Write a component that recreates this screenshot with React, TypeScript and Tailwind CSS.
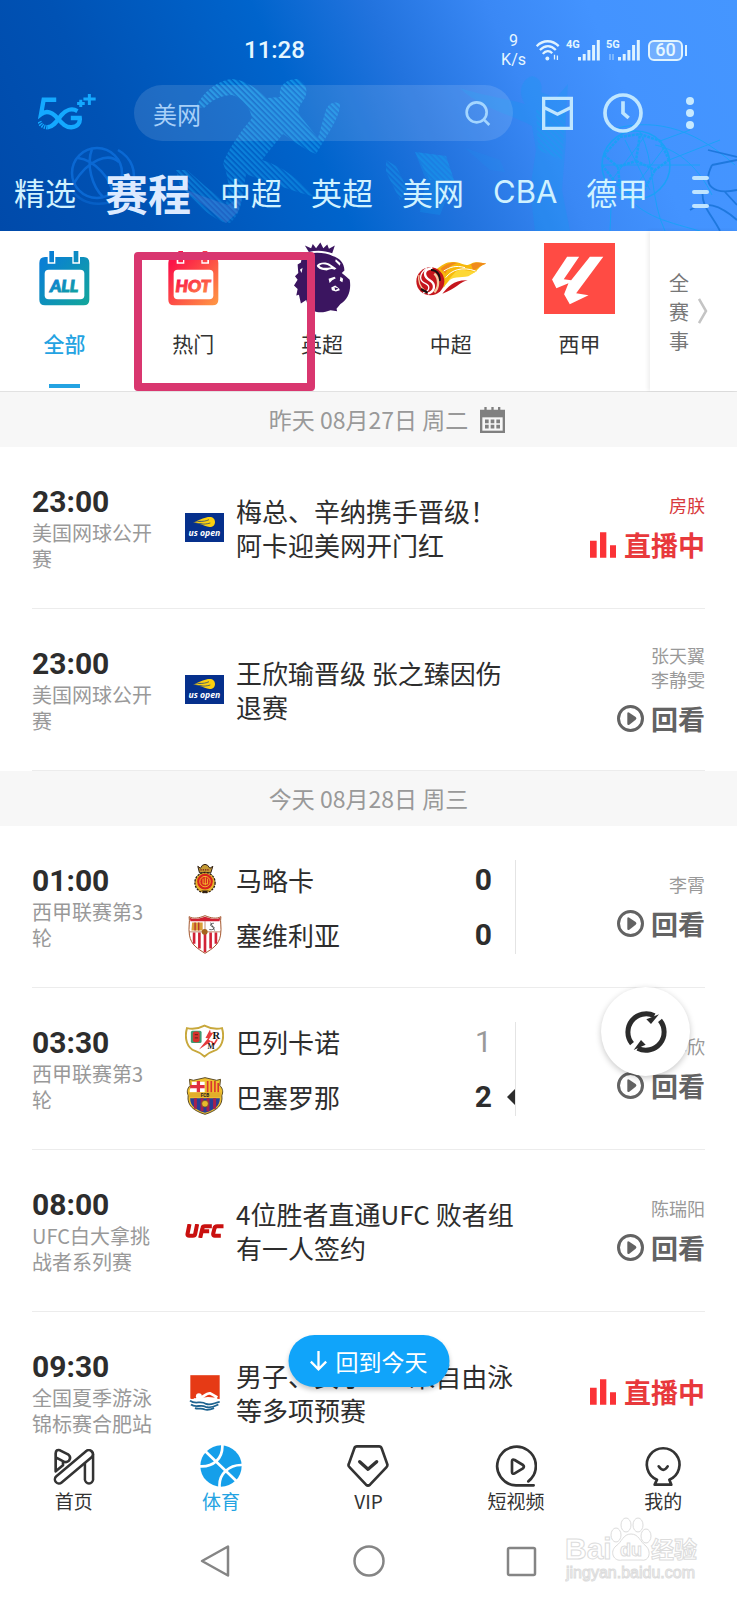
import { useState, type ReactNode } from 'react';

type Team = { name: string; score: number; badge: ReactNode; lost?: boolean; won?: boolean };

type Match = {
  id: string;
  time: string;
  league: string;
  title?: string;
  logo?: ReactNode;
  teams?: Team[];
  hosts: string[];
  status: 'live' | 'replay';
};

/* ---------- header drawings ---------- */

function HeaderArt() {
  return (
    <svg className="absolute inset-0 h-full w-full" viewBox="0 0 737 231" preserveAspectRatio="xMidYMid slice" aria-hidden="true">
      <defs>
        <pattern id="hatch" width="4" height="4" patternUnits="userSpaceOnUse" patternTransform="rotate(-45)">
          <rect width="2.4" height="4" fill="#16a0ee" />
        </pattern>
        <linearGradient id="fade" x1="0" y1="0" x2="0" y2="1">
          <stop offset="0.4" stopColor="#fff" />
          <stop offset="1" stopColor="#777" />
        </linearGradient>
        <mask id="fadeMask">
          <rect width="737" height="231" fill="url(#fade)" />
        </mask>
      </defs>
      <g fill="url(#hatch)" opacity="0.7" mask="url(#fadeMask)">
        <path d="M196 107 C203 92 218 80 232 79 C246 80 258 90 267 98 L280 97 C278 86 286 79 297 79 C307 82 309 92 303 101 C298 108 297 111 301 117 L318 138 L325 113 C327 104 334 100 340 104 C340 112 336 120 331 129 L316 154 C305 150 292 140 283 134 L269 151 L262 160 C282 166 300 180 315 197 C297 192 272 184 246 174 L243 194 C241 208 238 216 230 223 C222 224 212 216 202 209 L180 186 L176 170 L187 170 L205 186 L226 203 C231 190 228 176 223 163 C228 150 240 132 252 118 C250 108 243 98 232 95 C222 95 212 100 204 108 Z" />
      </g>
      <path d="M182 188 L226 223 L238 212 L243 194 L228 205 L202 196 Z" fill="#8a84dc" opacity="0.22" />
      <g fill="none" stroke="#1279ea" strokeWidth="2.5" opacity="0.6">
        <circle cx="97" cy="173" r="25" />
        <path d="M74 183 C88 160 108 152 119 162 M78 158 C95 160 112 180 112 193 M92 149 C86 165 92 186 103 197 M118 150 C132 158 137 172 132 186" />
        <path d="M72 190 C84 208 112 208 124 192" opacity="0.6" />
      </g>
      <g fill="#119cf0" opacity="0.28">
        <path d="M460 88 C480 95 505 98 525 104 C518 94 520 80 532 76 C541 78 543 86 541 92 L556 98 L568 84 L566 112 L566 140 L562 190 L570 231 L535 231 L530 190 L536 150 L532 126 C510 114 480 108 460 88 Z" />
        <path d="M415 152 L446 156 L454 180 L440 215 L420 212 L426 180 Z" />
        <path d="M465 148 L500 160 L505 172 L490 170 Z" opacity="0.5" />
      </g>
      <g fill="url(#hatch)" opacity="0.4">
        <path d="M386 160 L396 166 L408 190 L400 200 L386 172 Z M415 152 L446 156 L454 180 L430 180 Z M536 110 L566 110 L562 160 L538 150 Z" />
      </g>
      <g fill="none" stroke="#0aa8f5" strokeWidth="1.6" opacity="0.7">
        <circle cx="636" cy="165" r="34" />
        <path d="M604 155 L620 137 L640 134 L660 141 L669 160 M604 155 L618 167 L636 161 L640 134 M636 161 L655 170 L669 160 M618 167 L620 188 L640 198 L655 170 M602 165 L620 188" strokeWidth="2.5" strokeDasharray="3 1" />
        <path d="M602 165 H700 M610 130 C650 118 690 125 735 165 M620 188 C640 215 660 220 700 231 M655 145 C680 150 700 170 712 195 M640 132 C655 160 650 200 665 231 M660 141 L690 130 M669 160 L720 140 M612 185 L610 231 M625 140 L650 190 M645 136 L612 180 M664 148 L628 196" strokeWidth="1" />
      </g>
      <g fill="none" stroke="#1570d6" strokeWidth="1.8" opacity="0.8">
        <path d="M708 150 L737 157 M712 165 C702 185 712 195 737 190 M712 165 L737 160 M703 190 C700 205 712 215 720 231 M690 210 C705 200 720 205 737 220 M725 192 L737 205" />
      </g>
    </svg>
  );
}

function Logo5G() {
  return (
    <svg className="h-10 w-[58px] shrink-0" viewBox="113 280 175 120" role="img" aria-label="5G++">
      <g fill="none" stroke="#14a9ff" strokeWidth="13">
        <path d="M168 300 H130 L122 344 C140 330 156 338 172 356 C186 372 196 384 214 383 C232 382 241 370 239 355 H212" />
        <path d="M232 334 C214 324 196 332 184 346 C172 362 160 382 142 383" />
        <path d="M142 383 C126 382 120 374 116 364" strokeDasharray="4 3" />
      </g>
      <path d="M231 311 H254 M242 300 V322 M250 298 H287 M268 283 V316" fill="none" stroke="#14a9ff" strokeWidth="9" />
    </svg>
  );
}

function Signal({ label, arrows }: { label: string; arrows?: boolean }) {
  return (
    <div className="flex items-start">
      <span className="w-3 font-[Roboto] text-[11px] leading-3 font-bold">{label}</span>
      <svg className="h-[22px] w-[22px] overflow-visible" viewBox="0 0 22 22" aria-hidden="true">
        <path d="M1.500 21.500V18M6.200 21.500V15M10.900 21.500V11M15.600 21.500V6M20.300 21.500V1" stroke="#dff3ff" strokeWidth="3" />
        {arrows && <path d="M-8 15v6M-5 15v6" stroke="#8fc4ff" strokeWidth="1.500" />}
      </svg>
    </div>
  );
}

function StatusBar() {
  return (
    <div className="relative flex h-[85px] items-center justify-between pt-[15px] pr-[50px] pl-[244px] text-[#e6f7ff]">
      <span className="font-[Roboto] text-2xl font-medium">11:28</span>
      <div className="flex items-center gap-1.5">
        <div className="mr-1 text-center font-[Roboto] text-base leading-[19px]">
          <div>9</div>
          <div>K/s</div>
        </div>
        <svg className="h-[22px] w-6" viewBox="510 115 74 66" aria-hidden="true">
          <g fill="none" stroke="#dff3ff" strokeWidth="7">
            <path d="M512 136 C532 116 560 116 580 136" />
            <path d="M522 148 C538 132 556 132 571 148" />
            <path d="M531 160 C540 149 552 149 560 158" />
            <path d="M567 163v14M576 165v14" strokeWidth="4" />
          </g>
          <circle cx="545" cy="174" r="6" fill="#dff3ff" />
        </svg>
        <Signal label="4G" />
        <Signal label="5G" arrows />
        <div className="flex items-center">
          <div className="ml-0.5 flex h-[21px] w-[35px] items-center justify-center rounded-md border-2 border-[#dff3ff] bg-white/25 font-[Roboto] text-lg leading-none font-medium">60</div>
          <div className="ml-0.5 h-[11px] w-0.5 bg-[#dff3ff]" />
        </div>
      </div>
    </div>
  );
}

function SearchRow() {
  return (
    <div className="relative flex h-14 items-center pr-[43px] pl-[38px]">
      <Logo5G />
      <label className="ml-[38px] flex h-14 min-w-0 flex-1 items-center rounded-full bg-white/12 pr-[22px] pl-[19px]">
        <span className="sr-only">搜索</span>
        <input className="h-full min-w-0 flex-1 bg-transparent text-2xl text-[#a8d0f8] outline-none placeholder:text-[#a8d0f8]" type="text" placeholder="美网" />
        <svg className="h-[26px] w-[26px]" viewBox="295 300 78 78" aria-hidden="true">
          <g fill="none" stroke="#a4d6ff" strokeWidth="8">
            <circle cx="330" cy="337" r="30" />
            <path d="M351 358 L368 375" />
          </g>
        </svg>
      </label>
      <button type="button" aria-label="消息" className="ml-[29px]">
        <svg className="h-[35px] w-[31px]" viewBox="524 290 94 104" fill="none" stroke="#bfe6ff" strokeWidth="10">
          <path d="M529 296 H613 V387 H529 Z M529 323 L571 344 L613 323" />
        </svg>
      </button>
      <button type="button" aria-label="历史" className="ml-[30px]">
        <svg className="h-10 w-10" viewBox="708 279 120 120" fill="none" stroke="#bfe6ff">
          <circle cx="768" cy="339" r="54" strokeWidth="11" />
          <path d="M768 304 V339 L785 354" strokeWidth="11" />
        </svg>
      </button>
      <button type="button" aria-label="更多" className="ml-[43px] flex flex-col gap-1">
        <i className="h-2 w-2 rounded-full bg-[#c8eaff]" />
        <i className="h-2 w-2 rounded-full bg-[#c8eaff]" />
        <i className="h-2 w-2 rounded-full bg-[#c8eaff]" />
      </button>
    </div>
  );
}

const channels = ['精选', '赛程', '中超', '英超', '美网', 'CBA', '德甲'];

function ChannelTabs() {
  const [active, setActive] = useState('赛程');
  return (
    <nav className="relative flex h-[90px] items-center gap-[29px] overflow-hidden pt-3 pr-7 pl-[14px] whitespace-nowrap">
      {channels.map(c => (
        <button
          key={c}
          type="button"
          onClick={() => setActive(c)}
          className={c === active ? 'text-[43px] leading-none font-bold text-[#dceaff]' : c === 'CBA' ? 'font-[Inter] text-[31px] text-[#d0f2ff]' : 'text-[31px] text-[#d0f2ff]'}
        >
          {c}
        </button>
      ))}
      <button type="button" aria-label="全部频道" className="ml-auto flex flex-col gap-[10px]">
        <i className="h-1 w-[17px] rounded-full bg-[#bfe4ff]" />
        <i className="h-1 w-[17px] rounded-full bg-[#bfe4ff]" />
        <i className="h-1 w-[17px] rounded-full bg-[#bfe4ff]" />
      </button>
    </nav>
  );
}

/* ---------- league strip ---------- */

function CalendarIcon({ id, from, to, text }: { id: string; from: string; to: string; text: string }) {
  return (
    <svg className="h-[55px] w-[51px]" viewBox="0 0 153 165" aria-hidden="true">
      <defs>
        <linearGradient id={id} x1="0" y1="0" x2="1" y2="1">
          <stop offset="0.15" stopColor={from} />
          <stop offset="1" stopColor={to} />
        </linearGradient>
      </defs>
      <path d="M31 0 H45 V18 H104 V0 H118 V18 H134 Q151 18 151 36 V146 Q151 163 134 163 H18 Q1 163 1 146 V36 Q1 18 18 18 H31 Z" fill={`url(#${id})`} />
      <path d="M26 18 H31 V34 H45 V18 H49 V38 H26 Z M100 18 H104 V34 H118 V18 H123 V38 H100 Z" fill="#fff" />
      <rect x="17" y="56" width="119" height="89" rx="12" fill="#fff" />
      <text x="75" y="123" textAnchor="middle" fontFamily="Lato, sans-serif" fontSize="52" fontWeight="900" fontStyle="italic" fill={`url(#${id})`} stroke={`url(#${id})`} strokeWidth="3">
        {text}
      </text>
    </svg>
  );
}

function LionIcon() {
  return (
    <svg className="h-[72px] w-[58px]" viewBox="874 37 176 216" aria-hidden="true">
      <g fill="#3b1560">
        <path d="M922 66 L910 46 L929 55 L934 42 L944 55 L957 37 L966 55 L978 43 L983 56 L1001 46 L993 70 C970 61 945 60 922 66 Z" />
        <path d="M902 76 C930 66 970 66 994 78 C1014 84 1030 98 1030 122 L1022 130 L1034 140 L1046 150 C1052 184 1040 210 1018 224 L1006 238 L1008 246 L988 243 C970 250 950 252 936 244 L920 232 L914 212 L898 222 L892 196 L884 198 L888 178 L877 168 L888 150 L880 140 L890 130 L888 104 L898 98 Z" />
      </g>
      <g fill="#fff">
        <path d="M946 108 C952 97 974 95 988 104 L1006 116 L1000 120 C990 115 984 120 976 122 C964 122 950 118 946 108 Z" />
        <path d="M982 147 L1000 141 L1004 146 L993 152 L985 160 Z" />
        <path d="M1018 141 L1026 147 L1024 158 L1016 153 Z M990 174 L1002 168 L1014 177 L1016 182 L1004 186 L992 182 Z" />
        <path d="M912 84 L930 78 L922 88 Z M1004 88 L1018 100 L1016 108 L1002 94 Z" />
        <path d="M895 120 L903 114 L900 130 Z" />
      </g>
      <g fill="#3b1560">
        <path d="M954 108 C964 99 978 104 990 112 C976 113 964 118 954 108 Z" />
        <path d="M1000 173 L1012 177 L1002 182 Z" />
      </g>
    </svg>
  );
}

function DragonBallIcon() {
  return (
    <svg className="h-9 w-[72px]" viewBox="140 90 216 106" aria-hidden="true">
      <path d="M205 116 C222 104 236 92 262 96 C282 98 290 110 308 100 C322 92 340 98 354 100 C336 104 330 116 322 124 C306 134 290 128 274 130 C256 134 240 150 226 172 Z" fill="#f7b90c" />
      <path d="M216 116 C236 96 258 94 270 98 C250 102 238 112 232 130 Z M308 102 C325 92 342 98 354 100 C334 104 326 118 314 120 Z" fill="#f08a1c" />
      <path d="M232 158 C252 136 276 144 300 138 L326 122 C300 128 282 110 262 124 Z" fill="#fdd835" />
      <path d="M222 190 C240 170 256 148 298 150 C276 154 262 176 222 190 Z" fill="#c5161d" />
      <path d="M232 142 C250 118 282 108 322 122 M226 122 C246 110 262 104 290 112" fill="none" stroke="#fff" strokeWidth="3" />
      <circle cx="186" cy="153" r="42" fill="#c5161d" />
      <g fill="none" strokeWidth="7">
        <path d="M192 113 C160 118 168 140 184 150 C204 162 200 184 178 190" stroke="#fff" />
        <path d="M176 112 C148 134 154 152 172 160 C188 168 182 184 164 188" stroke="#fff" strokeWidth="4" />
        <path d="M188 119 C206 118 216 134 214 152" stroke="#181010" strokeWidth="6" />
        <path d="M198 130 C214 144 212 172 198 186" stroke="#f6c9a0" />
        <path d="M152 134 C148 152 156 170 168 180" stroke="#f6c9a0" strokeWidth="4" />
        <path d="M158 176 L178 187" stroke="#181010" strokeWidth="7" />
      </g>
    </svg>
  );
}

function LaLigaIcon() {
  return (
    <svg className="h-[71px] w-[71px]" viewBox="531 38 212 212" aria-hidden="true">
      <rect x="531" y="38" width="212" height="212" fill="#ff4b44" />
      <path d="M600 79 H636 L590 146 L612 149 L668 79 H708 L627 188 L664 194 L608 221 L591 191 L604 158 L568 173 L555 147 Z" fill="#fff" />
    </svg>
  );
}

const leagues = [
  { name: '全部', icon: <CalendarIcon id="calAll" from="#0a7fd4" to="#13a79a" text="ALL" /> },
  { name: '热门', icon: <CalendarIcon id="calHot" from="#fb1348" to="#ff9a44" text="HOT" /> },
  { name: '英超', icon: <LionIcon /> },
  { name: '中超', icon: <DragonBallIcon /> },
  { name: '西甲', icon: <LaLigaIcon /> },
];

function LeagueStrip() {
  const [active, setActive] = useState('全部');
  return (
    <div className="relative flex h-[161px] border-b border-[#e2e2e2] bg-white">
      <div className="grid min-w-0 flex-1 grid-cols-5 pr-1.5">
        {leagues.map(l => (
          <button key={l.name} type="button" onClick={() => setActive(l.name)} className="flex flex-col items-center pt-[11px]">
            <span className="flex h-[72px] items-center">{l.icon}</span>
            <span className={l.name === active ? 'mt-[13px] text-[21px] leading-8 font-medium text-[#24a3e2]' : 'mt-[13px] text-[21px] leading-8 text-[#333]'}>{l.name}</span>
            {l.name === active && <span className="mt-[25px] h-1 w-[31px] bg-[#24a3e2]" />}
          </button>
        ))}
      </div>
      <button type="button" className="flex w-[87px] items-center justify-center gap-[9px] pr-[10px] text-xl leading-[29px] text-[#777] shadow-[-2px_0_4px_rgba(0,0,0,0.07)]">
        <span className="w-5">全赛事</span>
        <svg className="h-[26px] w-[10px]" viewBox="0 0 10 26" fill="none" stroke="#c4c4c4" strokeWidth="2.500" aria-hidden="true">
          <path d="M1 1 L8 13 L1 25" />
        </svg>
      </button>
      <div className="pointer-events-none absolute top-[21px] left-[134px] h-[139px] w-[181px] rounded border-8 border-[#d9366f]" />
    </div>
  );
}

/* ---------- badges ---------- */

function UsOpenLogo() {
  return (
    <svg className="h-[29px] w-[39px]" viewBox="0 0 117 87" role="img" aria-label="US Open">
      <rect width="117" height="87" fill="#06308c" />
      <path d="M29 26 C48 20 60 12 74 12 C84 12 90 18 90 27 C90 36 84 42 74 42 C64 41 54 36 44 33 L56 32 L24 29 L56 25 Z" fill="#fbd00f" />
      <path d="M44 33 C56 34 66 33 76 30 M40 25 C54 26 64 24 72 20" stroke="#06308c" strokeWidth="2" fill="none" />
      <text x="58" y="68" textAnchor="middle" fontFamily="Open Sans, sans-serif" fontSize="26" fontWeight="700" fontStyle="italic" fill="#fff">us open</text>
    </svg>
  );
}

function MallorcaBadge() {
  return (
    <svg className="h-[30px] w-6" viewBox="576 285 72 92" aria-hidden="true">
      <path d="M590 292 L598 298 L604 289 L612 286 L620 289 L627 298 L636 292 L630 312 H595 Z" fill="#c49a35" stroke="#2b1b12" strokeWidth="3" />
      <path d="M598 303 h28" stroke="#7a1a1a" strokeWidth="4" strokeDasharray="4 3" />
      <circle cx="612" cy="342" r="31" fill="#e9b52c" stroke="#2b1b12" strokeWidth="4" strokeDasharray="7 3" />
      <circle cx="612" cy="339" r="24" fill="#d8231f" />
      <circle cx="612" cy="339" r="16" fill="none" stroke="#f3b92c" strokeWidth="3" />
      <path d="M606 330 V346 H620 V330 M613 326 V350" stroke="#f3b92c" strokeWidth="3" fill="none" />
      <path d="M600 366 h24 l-12 9z" fill="#2b1b12" />
    </svg>
  );
}

function SevillaBadge() {
  return (
    <svg className="h-[39px] w-[34px]" viewBox="562 433 102 118" aria-hidden="true">
      <path d="M565 438 C578 446 596 442 613 435 C630 442 648 446 661 438 C658 454 664 470 660 494 C655 524 636 534 613 549 C590 534 571 524 566 494 C562 470 568 454 565 438 Z" fill="#fff" stroke="#a3552c" strokeWidth="3" />
      <path d="M567 441 C580 448 596 444 613 438 C630 444 646 448 659 441 L657 452 H569 Z" fill="#cf2030" />
      <path d="M580 486 V520 M596 486 V534 M613 486 V546 M630 486 V534 M646 486 V520" stroke="#d22236" strokeWidth="8" />
      <path d="M566 484 H660 M613 452 V484" stroke="#a3552c" strokeWidth="2" />
      <path d="M574 456 H606 V480 H572 Z" fill="#dba03a" />
      <path d="M583 456 V480 M594 456 V480" stroke="#b7312e" strokeWidth="4" />
      <path d="M640 458 C626 458 628 468 636 468 C646 470 640 480 626 477 M630 456 L642 480" stroke="#444" strokeWidth="2.500" fill="none" />
      <circle cx="612" cy="484" r="9" fill="#a4621c" />
    </svg>
  );
}

function RayoBadge() {
  return (
    <svg className="h-[34px] w-[39px]" viewBox="553 760 120 103" aria-hidden="true">
      <path d="M559 772 C578 776 598 772 613 764 C628 772 648 776 667 772 C676 804 666 834 642 842 C630 846 620 852 613 859 C606 852 596 846 584 842 C560 834 550 804 559 772 Z" fill="#fff" stroke="#c8a83c" strokeWidth="6" />
      <rect x="571" y="780" width="33" height="38" rx="5" fill="#3f9a72" />
      <rect x="577" y="782" width="21" height="33" rx="8" fill="#d8302c" />
      <path d="M583 792 h10 M583 802 h10" stroke="#5b2418" strokeWidth="3" />
      <path d="M630 776 L616 802 L624 803 L596 838 L634 812 L626 808 L640 786 L632 786 Z" fill="#e63b3c" />
      <path d="M634 812 L642 822 L652 806" stroke="#e63b3c" strokeWidth="5" fill="none" />
      <text x="638" y="805" fontFamily="Liberation Serif, serif" fontSize="32" fontWeight="700" fill="#111">R</text>
      <text x="622" y="837" fontFamily="Liberation Serif, serif" fontSize="23" fontWeight="700" fill="#111">M</text>
    </svg>
  );
}

function BarcaBadge() {
  return (
    <svg className="h-[38px] w-[38px]" viewBox="556 920 114 115" aria-hidden="true">
      <path d="M566 927 L578 930 L613 922 L648 930 L660 927 L658 946 C668 956 668 966 664 976 C668 1006 648 1022 613 1033 C578 1022 558 1006 562 976 C558 966 558 956 568 946 Z" fill="#efc02f" stroke="#5a4a25" strokeWidth="3" />
      <path d="M573 934 H612 V966 H567 C565 958 570 952 574 947 Z" fill="#fff" />
      <path d="M593 932 V966 M568 949 H612" stroke="#df2f3f" strokeWidth="10" />
      <path d="M621 932 V966 M632 932 V966 M643 932 V966 M653 938 V966" stroke="#d9362e" strokeWidth="5" />
      <rect x="565" y="967" width="96" height="14" fill="#e2ae2a" />
      <text x="613" y="980" textAnchor="middle" fontFamily="Roboto, sans-serif" fontSize="14" fontWeight="700" fill="#222">FCB</text>
      <path d="M568 984 H658 C658 1008 640 1020 613 1028 C586 1020 568 1008 568 984 Z" fill="#263f96" />
      <path d="M584 984 V1016 M604 984 V1024 M622 984 V1024 M642 984 V1016" stroke="#a4204f" strokeWidth="9" />
      <circle cx="613" cy="1001" r="10" fill="#e9b92e" stroke="#6d5320" strokeWidth="2" />
    </svg>
  );
}

function UfcLogo() {
  return (
    <svg className="h-[14px] w-[39px]" viewBox="0 0 116 42" role="img" aria-label="UFC" fill="none" stroke="#c9100f" strokeWidth="12">
      <path d="M13 0 L7 30 Q6 35 12 35 H23 Q29 35 30 30 L36 0" />
      <path d="M45 42 L52 12 Q53 7 59 7 H80 M50 22 H72" />
      <path d="M115 7 H96 Q89 7 88 13 L84 29 Q83 35 89 35 H107" />
    </svg>
  );
}

function SwimLogo() {
  return (
    <svg className="h-[38px] w-8" viewBox="564 670 97 114" role="img" aria-label="游泳">
      <path d="M568 673 H657 V745 H568 Z" fill="#e63a15" />
      <path d="M566 742 C578 752 590 744 600 748 C620 758 636 742 660 752 V784 H566 Z" fill="#fff" />
      <circle cx="594" cy="737" r="9" fill="#fff" />
      <path d="M578 746 C600 752 612 726 628 728 L650 740 M604 748 C618 736 634 748 650 744" fill="none" stroke="#fff" strokeWidth="8" />
      <path d="M567 750 C584 764 598 748 616 760 C630 766 642 756 657 754 M570 762 C584 774 600 760 614 769 C630 774 642 768 653 762 M582 773 C594 777 600 771 612 777 C622 780 630 777 640 773" fill="none" stroke="#1d6390" strokeWidth="5.500" />
    </svg>
  );
}

/* ---------- schedule ---------- */

const yesterday: Match[] = [
  { id: 'm1', time: '23:00', league: '美国网球公开赛', title: '梅总、辛纳携手晋级！\n阿卡迎美网开门红', logo: <UsOpenLogo />, hosts: ['房朕'], status: 'live' },
  { id: 'm2', time: '23:00', league: '美国网球公开赛', title: '王欣瑜晋级 张之臻因伤\n退赛', logo: <UsOpenLogo />, hosts: ['张天翼', '李静雯'], status: 'replay' },
];

const today: Match[] = [
  {
    id: 'm3', time: '01:00', league: '西甲联赛第3轮', hosts: ['李霄'], status: 'replay',
    teams: [
      { name: '马略卡', score: 0, badge: <MallorcaBadge /> },
      { name: '塞维利亚', score: 0, badge: <SevillaBadge /> },
    ],
  },
  {
    id: 'm4', time: '03:30', league: '西甲联赛第3轮', hosts: ['李欣'], status: 'replay',
    teams: [
      { name: '巴列卡诺', score: 1, badge: <RayoBadge />, lost: true },
      { name: '巴塞罗那', score: 2, badge: <BarcaBadge />, won: true },
    ],
  },
  { id: 'm5', time: '08:00', league: 'UFC白大拿挑战者系列赛', title: '4位胜者直通UFC 败者组\n有一人签约', logo: <UfcLogo />, hosts: ['陈瑞阳'], status: 'replay' },
  { id: 'm6', time: '09:30', league: '全国夏季游泳锦标赛合肥站', title: '男子、女子200米自由泳\n等多项预赛', logo: <SwimLogo />, hosts: [], status: 'live' },
];

function DateBar({ label, calendar }: { label: string; calendar?: boolean }) {
  return (
    <div className="flex h-[55px] items-center justify-center bg-[#f7f7f7] text-[23px] text-[#999]">
      <div className="relative">
        {label}
        {calendar && (
          <button type="button" aria-label="选择日期" className="absolute top-1/2 left-full ml-3 -translate-y-1/2">
            <svg className="h-[26px] w-[25px]" viewBox="0 0 75 78" aria-hidden="true">
              <path d="M0 8 H13 V0 H20 V8 H34 V0 H41 V8 H54 V0 H61 V8 H75 V78 H0 Z" fill="#808080" />
              <rect x="7" y="31" width="61" height="40" fill="#f7f7f7" />
              <path d="M15 43 H60 M15 59 H60" stroke="#808080" strokeWidth="11" strokeDasharray="11 6" />
            </svg>
          </button>
        )}
      </div>
    </div>
  );
}

function StatusButton({ status }: { status: Match['status'] }) {
  if (status === 'live') {
    return (
      <button type="button" className="flex items-center gap-2 text-[27px] leading-8 font-bold text-[#e8393c]">
        <svg className="h-[26px] w-[26px]" viewBox="0 0 78 78" fill="#fb3236" aria-hidden="true">
          <path d="M0 26 H20 V77 H0 Z M30 1 H49 V77 H30 Z M60 40 H78 V77 H60 Z" />
        </svg>
        直播中
      </button>
    );
  }
  return (
    <button type="button" className="flex items-center gap-[7px] text-[27px] leading-8 font-bold text-[#636363]">
      <svg className="h-[27px] w-[27px]" viewBox="0 0 81 81" aria-hidden="true">
        <circle cx="40.500" cy="40.500" r="36" fill="none" stroke="#636363" strokeWidth="9" />
        <path d="M31 26 Q31 20 37 23 L56 36 Q61 40 56 44 L37 59 Q31 62 31 56 Z" fill="#636363" />
      </svg>
      回看
    </button>
  );
}

function MatchRow({ match }: { match: Match }) {
  return (
    <li className="mx-8 grid h-[162px] grid-cols-[153px_minmax(0,7fr)_minmax(0,4fr)] items-center border-b border-[#ececec]">
      <div>
        <div className="font-[Roboto] text-[30px] leading-9 font-bold text-[#2d2d2d]">{match.time}</div>
        <div className="w-[122px] text-xl leading-[26px] text-[#999]">{match.league}</div>
      </div>
      {match.teams ? (
        <div className="flex h-[94px] flex-col justify-center border-r border-[#e4e4e4]">
          {match.teams.map(t => (
            <div key={t.name} className="relative flex h-[55px] shrink-0 items-center text-[26px] text-[#2d2d2d]">
              <span className="flex w-[39px] justify-center">{t.badge}</span>
              <span className="ml-3 flex-1">{t.name}</span>
              <span className={t.lost ? 'mr-[23px] font-[Roboto] text-[30px] text-[#999]' : 'mr-[23px] font-[Roboto] text-[30px] font-bold'}>{t.score}</span>
              {t.won && (
                <svg className="absolute top-5 right-0 h-4 w-2" viewBox="0 0 8 16" fill="#2d2d2d" aria-hidden="true">
                  <path d="M8 0 V16 L0 8 Z" />
                </svg>
              )}
            </div>
          ))}
        </div>
      ) : (
        <div className="flex items-center gap-3">
          <span className="flex w-[39px] shrink-0 justify-center">{match.logo}</span>
          <p className="text-[26px] leading-[34px] whitespace-pre-line text-[#2d2d2d]">{match.title}</p>
        </div>
      )}
      <div className="flex flex-col items-end gap-3 pb-0.5">
        {match.hosts.length > 0 && (
          <div className={match.status === 'live' ? 'text-right text-lg leading-6 text-[#d8393c]' : 'text-right text-lg leading-6 text-[#999]'}>
            {match.hosts.map(h => (
              <div key={h}>{h}</div>
            ))}
          </div>
        )}
        <StatusButton status={match.status} />
      </div>
    </li>
  );
}

/* ---------- bottom bars ---------- */

const navItems = [
  {
    name: '首页',
    icon: (
      <svg className="h-[42px] w-[42px]" viewBox="157 43 126 126" fill="none" strokeLinecap="round" strokeLinejoin="round">
        <path d="M265 71 V146" stroke="#333" strokeWidth="32" />
        <path d="M265 71 V146" stroke="#fff" strokeWidth="17" />
        <path d="M165 122 V68 Q166 55 178 59 L202 71 Q213 80 205 90 Q198 97 188 92 L167 81 M165 122 L187 104 V94" stroke="#333" strokeWidth="8" />
        <path d="M175 146 L264 71" stroke="#333" strokeWidth="32" />
        <path d="M175 146 L264 71" stroke="#fff" strokeWidth="17" />
      </svg>
    ),
  },
  {
    name: '体育',
    icon: (
      <svg className="h-[42px] w-[42px]" viewBox="600 43 126 126" fill="none" stroke="#fff" strokeWidth="8">
        <circle cx="663" cy="106" r="62" fill="#159fea" stroke="none" />
        <path d="M612 58 L712 154 M667 40 C670 84 640 110 598 107 M659 172 C654 130 688 101 728 103" />
      </svg>
    ),
  },
  {
    name: 'VIP',
    icon: (
      <svg className="h-[42px] w-[42px]" viewBox="0 0 126 126" fill="none" stroke="#333" strokeWidth="8" strokeLinejoin="round" strokeLinecap="round">
        <path d="M30 4 H96 Q102 4 104 10 L121 58 Q122 63 118 67 L69 119 Q63 124 57 119 L8 67 Q3 63 5 58 L22 10 Q24 4 30 4 Z" />
        <path d="M38 50 L63 73 L89 50" strokeWidth="10" />
      </svg>
    ),
  },
  {
    name: '短视频',
    icon: (
      <svg className="h-[42px] w-[42px]" viewBox="382 41 126 126" fill="none" stroke="#333" strokeWidth="8" strokeLinecap="round" strokeLinejoin="round">
        <path d="M482 150 A58 58 0 1 0 445 162 H498" />
        <path d="M433 90 Q433 82 441 86 L466 101 Q471 106 466 111 L441 126 Q433 130 433 122 Z" />
      </svg>
    ),
  },
  {
    name: '我的',
    icon: (
      <svg className="h-[42px] w-[42px]" viewBox="825 43 126 126" fill="none" stroke="#333" strokeWidth="8" strokeLinecap="round" strokeLinejoin="round">
        <path d="M863 162 L870 147 A49 49 0 1 1 907 147 L913 162 Z" />
        <path d="M875 107 Q889 128 902 107" />
      </svg>
    ),
  },
];

function BottomNav() {
  return (
    <nav className="grid grid-cols-5 bg-white pt-[11px]">
      {navItems.map(n => (
        <button key={n.name} type="button" className="flex flex-col items-center">
          {n.icon}
          <span className={n.name === '体育' ? 'text-[19px] leading-7 text-[#24a3e2]' : 'text-[19px] leading-7 text-[#333]'}>{n.name}</span>
        </button>
      ))}
    </nav>
  );
}

function Watermark() {
  return (
    <svg className="absolute top-0 right-9 h-[72px] w-[136px]" viewBox="0 0 136 72" fill="#fff" stroke="#dcdcdc" strokeWidth="1" aria-hidden="true">
      <text x="0" y="44" fontFamily="Liberation Sans, sans-serif" fontSize="30" fontWeight="700">Bai</text>
      <ellipse cx="51" cy="20" rx="5" ry="7" />
      <ellipse cx="61" cy="10" rx="5" ry="7" />
      <ellipse cx="73" cy="10" rx="5" ry="7" />
      <ellipse cx="81" cy="21" rx="5" ry="7" />
      <path d="M66 19 C58 19 57 27 51 31 C44 37 49 47 57 45 H76 C84 47 87 37 81 31 C75 27 74 19 66 19 Z" />
      <text x="55" y="41" fontFamily="Liberation Sans, sans-serif" fontSize="18" fontWeight="700">du</text>
      <text x="86" y="43" fontFamily="Noto Sans CJK SC, sans-serif" fontSize="23" fontWeight="700">经验</text>
      <text x="1" y="63" fontFamily="Liberation Sans, sans-serif" fontSize="16">jingyan.baidu.com</text>
    </svg>
  );
}

function SystemBar() {
  return (
    <div className="relative flex h-[85px] items-center justify-center gap-[121px] bg-white pt-1.5">
      <Watermark />
      <button type="button" aria-label="返回">
        <svg className="h-8 w-8" viewBox="0 0 32 32" fill="none" stroke="#858585" strokeWidth="2.500" strokeLinejoin="round">
          <path d="M2 16 L28 1.500 V30.500 Z" />
        </svg>
      </button>
      <button type="button" aria-label="主页">
        <svg className="h-8 w-8" viewBox="0 0 32 32" fill="none" stroke="#858585" strokeWidth="2.500">
          <circle cx="16" cy="16" r="14.500" />
        </svg>
      </button>
      <button type="button" aria-label="最近任务">
        <svg className="h-8 w-8" viewBox="0 0 32 32" fill="none" stroke="#858585" strokeWidth="2.500">
          <rect x="2" y="3" width="27" height="27" rx="1.500" />
        </svg>
      </button>
    </div>
  );
}

export default function App() {
  return (
    <div className='flex h-screen flex-col bg-white font-["Noto_Sans_CJK_SC",sans-serif]'>
      <header className="relative shrink-0 overflow-hidden bg-[linear-gradient(66deg,#004aaa_0%,#0052b4_18%,#0064cc_42%,#2273de_56%,#3a88f5_70%,#4393ff_82%,#4596ff_100%)]">
        <HeaderArt />
        <StatusBar />
        <SearchRow />
        <ChannelTabs />
      </header>
      <div className="shrink-0">
        <LeagueStrip />
      </div>
      <main className="relative min-h-0 flex-1 overflow-hidden">
        <DateBar label="昨天 08月27日 周二" calendar />
        <ul>
          {yesterday.map(m => (
            <MatchRow key={m.id} match={m} />
          ))}
        </ul>
        <DateBar label="今天 08月28日 周三" />
        <ul>
          {today.map(m => (
            <MatchRow key={m.id} match={m} />
          ))}
        </ul>
        <button type="button" aria-label="刷新" className="absolute right-[47px] bottom-[358px] flex h-[89px] w-[89px] items-center justify-center rounded-full bg-white shadow-[0_2px_6px_rgba(0,0,0,0.22)]">
          <svg className="h-[42px] w-[42px]" viewBox="772 721 126 126" fill="none" stroke="#2b2b2b" strokeWidth="15" aria-hidden="true">
            <path d="M793 819 A55 55 0 0 1 860 735" />
            <path d="M877 749 A55 55 0 0 1 810 833" />
            <path d="M836 746 L874 731 L850 760 Z M834 822 L798 838 L820 808 Z" fill="#2b2b2b" stroke="none" />
          </svg>
        </button>
        <button type="button" className="absolute bottom-[47px] left-1/2 flex h-[52px] w-[161px] -translate-x-1/2 items-center justify-center gap-2 rounded-full bg-[#10a4fa] text-[23px] text-white shadow-[0_3px_5px_rgba(0,0,0,0.22)]">
          <svg className="h-5 w-[18px]" viewBox="0 0 54 60" fill="none" stroke="#fff" strokeWidth="7" aria-hidden="true">
            <path d="M27 0 V55 M4 32 L27 55 L50 32" />
          </svg>
          回到今天
        </button>
      </main>
      <footer className="shrink-0">
        <BottomNav />
        <SystemBar />
      </footer>
    </div>
  );
}
